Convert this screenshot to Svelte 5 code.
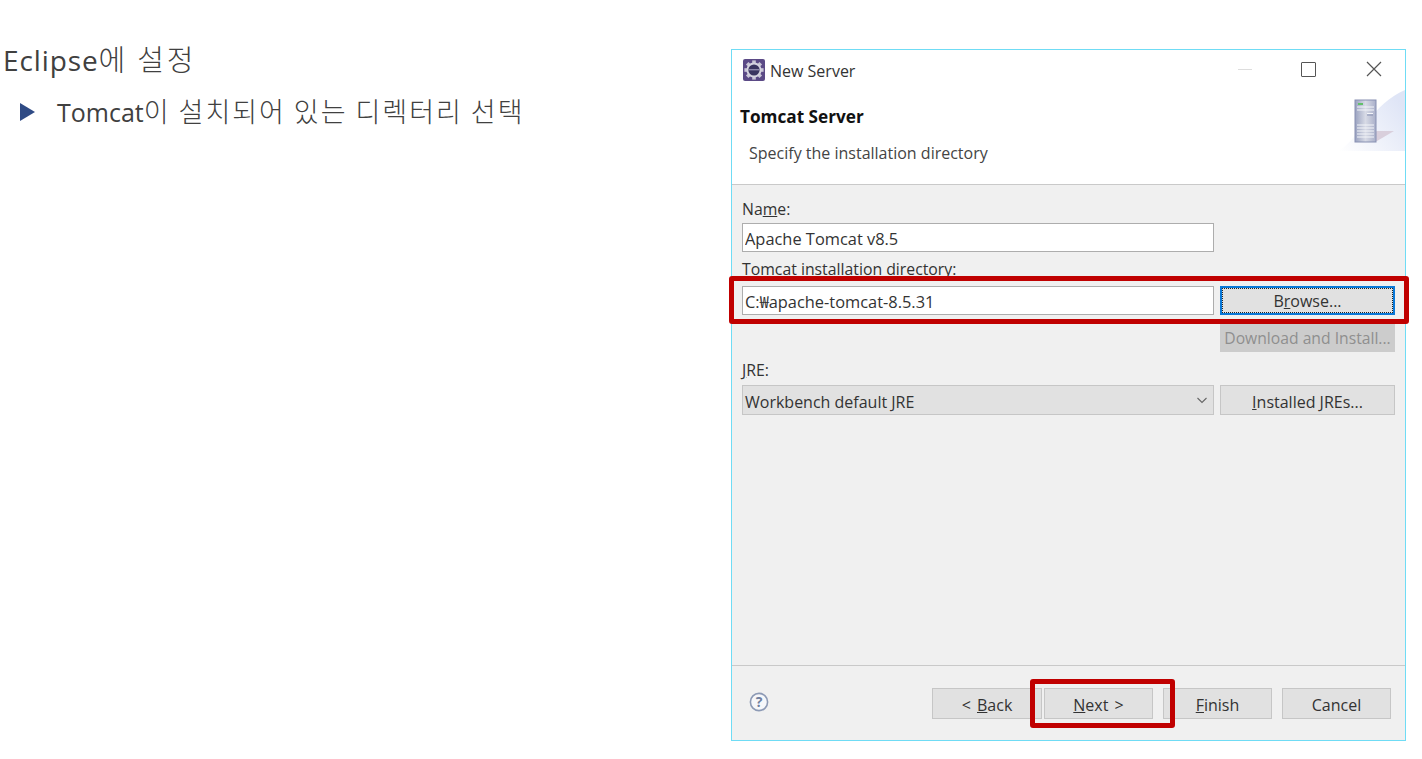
<script lang="ts">
  const teeth = [0, 45, 90, 135, 180, 225, 270, 315];
</script>

<div class="page">
  <section class="slide">
    <h1>Eclipse<span class="ko">에 설정</span></h1>
    <div class="bullet">
      <svg class="arrow" width="15" height="18" viewBox="0 0 15 18" aria-hidden="true"><path d="M0 0 L15 9 L0 18 Z" fill="#2f4b85" /></svg>
      <span>Tomcat<span class="ko">이 설치되어 있는 디렉터리 선택</span></span>
    </div>
  </section>

  <section class="window">
    <div class="titlebar">
      <svg class="app-icon" width="22" height="22" viewBox="0 0 22 22" aria-hidden="true">
        <rect width="22" height="22" rx="2" fill="#5b4a86" />
        {#each teeth as a}
          <rect x="9.2" y="1.4" width="3.6" height="4" fill="#c9c6d6" transform="rotate({a} 11 11)" />
        {/each}
        <circle cx="11" cy="11" r="7.6" fill="#d5d3df" />
        <circle cx="11" cy="11" r="5.6" fill="#3a3560" />
        <path d="M5.6 10 H16.4 V11.4 H5.6 Z" fill="#8d88ab" />
      </svg>
      <span class="title">New Server</span>
      <div class="controls">
        <span class="min"></span>
        <span class="max"></span>
        <svg class="close" width="16" height="16" viewBox="0 0 16 16" aria-hidden="true"><path d="M1 1 L15 15 M15 1 L1 15" stroke="#555" stroke-width="1.2" fill="none" /></svg>
      </div>
    </div>

    <header class="banner">
      <h2>Tomcat Server</h2>
      <p>Specify the installation directory</p>
      <div class="banner-art">
        <svg width="66" height="62" viewBox="0 0 66 62" aria-hidden="true">
          <defs>
            <linearGradient id="glow" x1="0" y1="1" x2="1" y2="0.3">
              <stop offset="0" stop-color="#fff" />
              <stop offset="1" stop-color="#dfe5f6" />
            </linearGradient>
            <linearGradient id="case" x1="0" y1="0" x2="1" y2="0">
              <stop offset="0" stop-color="#9aa2c0" />
              <stop offset="0.5" stop-color="#d8dbe6" />
              <stop offset="1" stop-color="#a9afc9" />
            </linearGradient>
          </defs>
          <path d="M0 61 C22 46 34 14 66 0 V61 Z" fill="url(#glow)" />
          <path d="M16 51 L38 51 L55 41 L38 41 Z" fill="#d9cfdc" />
          <rect x="16" y="10" width="21" height="42" fill="url(#case)" stroke="#8790b2" stroke-width="1" />
          <rect x="19" y="13" width="5" height="2" fill="#62c06a" />
          <path d="M18 17 H35 M18 20 H35 M28 23.5 H34 M18 35 H35 M18 38 H35 M18 41 H35 M18 44 H35 M18 47 H35" stroke="#f4f5f9" stroke-width="1.2" />
          <path d="M28 25 H34" stroke="#8790b2" stroke-width="1" />
        </svg>
      </div>
    </header>

    <div class="form">
      <label class="first" for="srv-name">Na<u>m</u>e:</label>
      <div class="row name-row">
        <input id="srv-name" class="field" value="Apache Tomcat v8.5" />
      </div>

      <label class="dir-label" for="srv-dir">Tomcat installation directory:</label>
      <div class="row dir-row">
        <input id="srv-dir" class="field" value="C:₩apache-tomcat-8.5.31" />
        <button class="btn side focused"><span>B<u>r</u>owse...</span></button>
      </div>
      <div class="row download-row">
        <button class="btn side disabled" disabled>Download and Install...</button>
      </div>

      <label class="jre-label" for="srv-jre"><u>J</u>RE:</label>
      <div class="row">
        <div id="srv-jre" class="select">
          <span>Workbench default JRE</span>
          <svg width="10" height="7" viewBox="0 0 10 7" aria-hidden="true"><path d="M0.5 1 L5 5.5 L9.5 1" stroke="#666" stroke-width="1.1" fill="none" /></svg>
        </div>
        <button class="btn side tall"><u>I</u>nstalled JREs...</button>
      </div>
    </div>

    <footer class="footer">
      <svg class="help" width="20" height="20" viewBox="0 0 20 20" aria-hidden="true">
        <circle cx="10" cy="10" r="8.6" fill="#f6f7fa" stroke="#8d9ab5" stroke-width="1.6" />
        <text x="10" y="14.6" text-anchor="middle" class="help-mark">?</text>
      </svg>
      <div class="nav">
        <div class="pair">
          <button class="btn nav-btn back">&lt; <u>B</u>ack</button>
          <button class="btn nav-btn"><u>N</u>ext &gt;</button>
        </div>
        <button class="btn nav-btn"><u>F</u>inish</button>
        <button class="btn nav-btn">Cancel</button>
      </div>
    </footer>

    <div class="mark mark-dir"></div>
    <div class="mark mark-next"></div>
  </section>
</div>

<style>
  :global(body) {
    margin: 0;
    background: #fff;
  }

  .page {
    height: 759px;
    box-sizing: border-box;
    padding-top: 49px;
    display: flex;
    overflow: hidden;
    font-family: "Open Sans", "Noto Sans CJK KR", sans-serif;
  }

  .slide {
    width: 731px;
    flex-shrink: 0;
    color: #404040;
  }

  .ko {
    font-family: "Noto Sans CJK KR", sans-serif;
    font-weight: 300;
  }

  h1 {
    margin: -6px 0 0 3px;
    font-size: 28px;
    line-height: 30px;
    font-weight: 400;
    letter-spacing: 0.9px;
  }

  h1 .ko {
    font-size: 29px;
    letter-spacing: 2.8px;
  }

  .bullet {
    display: flex;
    align-items: center;
    gap: 22px;
    margin: 21px 0 0 20px;
    font-size: 25px;
    line-height: 30px;
  }

  .bullet .ko {
    font-size: 27px;
    letter-spacing: 2px;
  }

  .arrow {
    flex-shrink: 0;
  }

  .window {
    position: relative;
    width: 675px;
    height: 692px;
    box-sizing: border-box;
    border: 1px solid #6fdcf5;
    display: flex;
    flex-direction: column;
    font-size: 16px;
    color: #333;
    background: #f0f0f0;
  }

  .titlebar {
    height: 40px;
    flex-shrink: 0;
    display: flex;
    align-items: center;
    padding: 0 0 0 11px;
    background: #fff;
  }

  .title {
    margin-left: 5px;
    font-size: 16px;
    padding-top: 2px;
  }

  .controls {
    margin-left: auto;
    display: flex;
    align-items: center;
    padding-right: 23px;
    margin-bottom: 2px;
  }

  .min {
    width: 14px;
    height: 1px;
    background: #ddd;
    margin-right: 49px;
  }

  .max {
    width: 13px;
    height: 13px;
    border: 1.5px solid #555;
    border-radius: 1px;
    margin-right: 50px;
  }

  .banner {
    position: relative;
    height: 95px;
    flex-shrink: 0;
    box-sizing: border-box;
    background: #fff;
    border-bottom: 1px solid #c9c9c9;
    padding: 16px 0 0 8px;
  }

  .banner h2 {
    margin: 0;
    font-size: 17.2px;
    line-height: 22px;
    font-weight: 700;
    color: #111;
  }

  .banner p {
    margin: 15px 0 0 9px;
    font-size: 16px;
    line-height: 20px;
    color: #444;
  }

  .banner-art {
    position: absolute;
    right: 0;
    top: 0;
    height: 61px;
    line-height: 0;
  }

  .form {
    flex: 1;
    padding: 14px 10px 0;
  }

  label {
    display: block;
    height: 20px;
    line-height: 20px;
    font-size: 15.8px;
  }

  .row {
    display: flex;
    gap: 6px;
  }

  .name-row {
    margin-top: 4px;
  }

  .field {
    width: 472px;
    height: 29px;
    box-sizing: border-box;
    margin: 0;
    padding: 2px 2px 0;
    border: 1px solid #adadad;
    background: #fff;
    font: inherit;
    font-size: 16.4px;
    color: #333;
    outline: none;
  }

  .dir-row .field {
    padding-top: 0;
  }

  .dir-label {
    margin-top: 7px;
  }

  .dir-row {
    margin-top: 7px;
  }

  .download-row {
    margin-top: 8px;
    justify-content: flex-end;
  }

  .jre-label {
    margin-top: 8px;
  }

  .jre-label + .row {
    margin-top: 5px;
  }

  .btn {
    margin: 0;
    padding: 3px 0 0;
    box-sizing: border-box;
    border: 1px solid #c6c6c6;
    background: #e1e1e1;
    font: inherit;
    color: #333;
  }

  .side {
    width: 175px;
    height: 29px;
  }

  .tall {
    height: 30px;
  }

  .focused {
    border: 2px solid #0a78d7;
    padding: 1px;
  }

  .focused span {
    display: block;
    height: 100%;
    line-height: 25px;
    box-sizing: border-box;
    outline: 1px dotted #222;
  }

  .disabled {
    padding-top: 1px;
    font-size: 15.7px;
    background: #cccccc;
    color: #8f8f8f;
    border-color: #cccccc;
  }

  .select {
    width: 472px;
    height: 30px;
    box-sizing: border-box;
    display: flex;
    align-items: center;
    justify-content: space-between;
    padding: 0 6px 0 2px;
    border: 1px solid #c6c6c6;
    background: #e1e1e1;
  }

  .select span {
    padding-top: 3px;
  }

  .footer {
    height: 75px;
    flex-shrink: 0;
    box-sizing: border-box;
    border-top: 1px solid #c9c9c9;
    display: flex;
    align-items: flex-start;
    padding: 22px 14px 0 17px;
  }

  .help {
    margin-top: 4px;
  }

  .help-mark {
    font-family: "Open Sans", sans-serif;
    font-size: 14px;
    font-weight: 700;
    fill: #6f7f9e;
  }

  .nav {
    margin-left: auto;
    display: flex;
    gap: 10px;
  }

  .pair {
    display: flex;
    gap: 2px;
  }

  .nav-btn {
    width: 109px;
    height: 31px;
    word-spacing: 2px;
  }

  .back {
    width: 110px;
  }

  .mark {
    position: absolute;
    box-sizing: border-box;
    border: 5px solid #c00000;
    border-radius: 3px;
    pointer-events: none;
  }

  .mark-dir {
    left: -3px;
    top: 226px;
    width: 680px;
    height: 48px;
  }

  .mark-next {
    left: 298px;
    top: 629px;
    width: 145px;
    height: 49px;
  }
</style>
